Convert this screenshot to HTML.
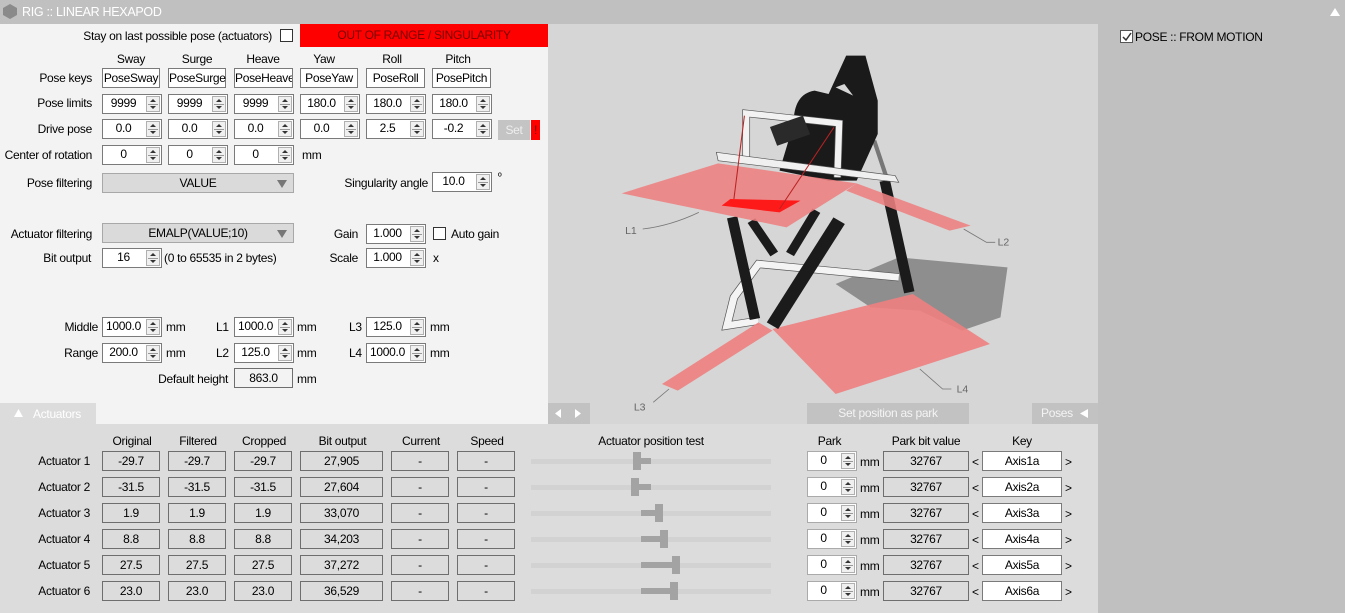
<!DOCTYPE html>
<html><head><meta charset="utf-8"><style>
*{box-sizing:border-box;margin:0;padding:0}
body{width:1345px;height:613px;overflow:hidden;background:#c0c0c0;font-family:"Liberation Sans",sans-serif;font-size:12px;color:#000;position:relative;letter-spacing:-0.3px}
.a{position:absolute;white-space:nowrap}
.r{text-align:right}
.c{text-align:center}
.tb{position:absolute;background:#fff;border:1px solid #7a7a7a;height:20px;line-height:18px;text-align:center}
.sp{position:absolute;background:#fff;border:1px solid #7a7a7a;height:20px;line-height:17px}
.sp span{position:absolute;left:0;right:17px;text-align:center}
.sp i{position:absolute;right:1px;top:1px;width:14px;height:16px;border:1px solid #b0b0b0;background:#f0f0f0}
.sp i:before{content:"";position:absolute;left:3px;top:2px;border:3px solid transparent;border-bottom:3px solid #333;border-top:0}
.sp i:after{content:"";position:absolute;left:3px;top:9px;border:3px solid transparent;border-top:3px solid #333;border-bottom:0}
.sp i b{position:absolute;left:1px;right:1px;top:7px;height:1px;background:#999}
.ro{position:absolute;background:#dcdcdc;border:1px solid #6e6e6e;height:20px;line-height:18px;text-align:center}
.cb{position:absolute;width:13px;height:13px;border:1px solid #333;background:#fff}
.combo{position:absolute;background:#dadada;border:1px solid #a8a8a8;height:20px;line-height:18px;text-align:center}
.combo:after{content:"";position:absolute;right:6px;top:6px;border:5px solid transparent;border-top:8px solid #777;border-bottom:0}
.trk{position:absolute;left:531px;width:240px;height:5px;background:#d2d2d2}
.th{position:absolute;width:8px;height:18px;background:#a3a3a3}
.fl{position:absolute;height:6px;background:#a3a3a3}
</style></head><body>
<div class="a" style="left:0;top:0;width:1345px;height:24px;background:#c0c0c0"></div>
<svg class="a" style="left:3px;top:4px" width="14" height="15"><polygon points="7,0 14,4 14,11 7,15 0,11 0,4" fill="#8a8a8a"/></svg>
<div class="a" style="left:22px;top:5px;color:#fff;font-size:12.5px">RIG :: LINEAR HEXAPOD</div>
<svg class="a" style="left:1330px;top:8px" width="10" height="8"><polygon points="5,0 10,8 0,8" fill="#fff"/></svg>

<div class="a" style="left:0;top:24px;width:548px;height:380px;background:#f3f3f3"></div>
<div class="a" style="left:0;top:403px;width:96px;height:21px;background:#dcdcdc"></div>
<svg class="a" style="left:14px;top:409px" width="9" height="8"><polygon points="4.5,0 9,8 0,8" fill="#fff"/></svg>
<div class="a" style="left:33px;top:407px;color:#fff">Actuators</div>
<div class="a" style="left:96px;top:403px;width:452px;height:21px;background:#f3f3f3"></div>

<div class="a r" style="left:0;width:272px;top:29px">Stay on last possible pose (actuators)</div>
<div class="cb" style="left:280px;top:29px"></div>
<div class="a c" style="left:300px;width:248px;top:24px;height:23px;line-height:23px;background:#ff0000;color:#700">OUT OF RANGE / SINGULARITY</div>

<div class="a c" style="left:102px;width:58px;top:52px">Sway</div>
<div class="a c" style="left:168px;width:58px;top:52px">Surge</div>
<div class="a c" style="left:234px;width:58px;top:52px">Heave</div>
<div class="a c" style="left:300px;width:48px;top:52px">Yaw</div>
<div class="a c" style="left:366px;width:52px;top:52px">Roll</div>
<div class="a c" style="left:432px;width:52px;top:52px">Pitch</div>

<div class="a r" style="left:0;width:92px;top:71px">Pose keys</div>
<div class="tb" style="left:102px;top:68px;width:58px">PoseSway</div>
<div class="tb" style="left:168px;top:68px;width:58px">PoseSurge</div>
<div class="tb" style="left:234px;top:68px;width:59px;overflow:hidden">PoseHeave</div>
<div class="tb" style="left:300px;top:68px;width:58px">PoseYaw</div>
<div class="tb" style="left:366px;top:68px;width:59px">PoseRoll</div>
<div class="tb" style="left:432px;top:68px;width:59px">PosePitch</div>

<div class="a r" style="left:0;width:92px;top:96px">Pose limits</div>
<div class="sp" style="left:102px;top:94px;width:60px"><span>9999</span><i><b></b></i></div>
<div class="sp" style="left:168px;top:94px;width:60px"><span>9999</span><i><b></b></i></div>
<div class="sp" style="left:234px;top:94px;width:60px"><span>9999</span><i><b></b></i></div>
<div class="sp" style="left:300px;top:94px;width:60px"><span>180.0</span><i><b></b></i></div>
<div class="sp" style="left:366px;top:94px;width:60px"><span>180.0</span><i><b></b></i></div>
<div class="sp" style="left:432px;top:94px;width:60px"><span>180.0</span><i><b></b></i></div>

<div class="a r" style="left:0;width:92px;top:122px">Drive pose</div>
<div class="sp" style="left:102px;top:119px;width:60px"><span>0.0</span><i><b></b></i></div>
<div class="sp" style="left:168px;top:119px;width:60px"><span>0.0</span><i><b></b></i></div>
<div class="sp" style="left:234px;top:119px;width:60px"><span>0.0</span><i><b></b></i></div>
<div class="sp" style="left:300px;top:119px;width:60px"><span>0.0</span><i><b></b></i></div>
<div class="sp" style="left:366px;top:119px;width:60px"><span>2.5</span><i><b></b></i></div>
<div class="sp" style="left:432px;top:119px;width:60px"><span>-0.2</span><i><b></b></i></div>
<div class="a c" style="left:498px;width:32px;top:120px;height:20px;line-height:20px;background:#c4c4c4;color:#eee">Set</div>
<div class="a c" style="left:531px;width:9px;top:120px;height:20px;line-height:20px;background:#f00;color:#700">!</div>

<div class="a r" style="left:0;width:92px;top:148px">Center of rotation</div>
<div class="sp" style="left:102px;top:145px;width:60px"><span>0</span><i><b></b></i></div>
<div class="sp" style="left:168px;top:145px;width:60px"><span>0</span><i><b></b></i></div>
<div class="sp" style="left:234px;top:145px;width:60px"><span>0</span><i><b></b></i></div>
<div class="a" style="left:302px;top:148px">mm</div>

<div class="a r" style="left:0;width:92px;top:176px">Pose filtering</div>
<div class="combo" style="left:102px;top:173px;width:192px">VALUE</div>
<div class="a r" style="left:320px;width:108px;top:176px">Singularity angle</div>
<div class="sp" style="left:432px;top:172px;width:60px"><span>10.0</span><i><b></b></i></div>
<div class="a" style="left:498px;top:172px;font-size:10px">º</div>

<div class="a r" style="left:0;width:92px;top:227px">Actuator filtering</div>
<div class="combo" style="left:102px;top:223px;width:192px">EMALP(VALUE;10)</div>
<div class="a r" style="left:310px;width:48px;top:227px">Gain</div>
<div class="sp" style="left:366px;top:224px;width:60px"><span>1.000</span><i><b></b></i></div>
<div class="cb" style="left:433px;top:227px"></div>
<div class="a" style="left:451px;top:227px">Auto gain</div>
<div class="a r" style="left:0;width:91px;top:251px">Bit output</div>
<div class="sp" style="left:102px;top:248px;width:60px"><span>16</span><i><b></b></i></div>
<div class="a" style="left:164px;top:251px">(0 to 65535 in 2 bytes)</div>
<div class="a r" style="left:310px;width:48px;top:251px">Scale</div>
<div class="sp" style="left:366px;top:248px;width:60px"><span>1.000</span><i><b></b></i></div>
<div class="a" style="left:433px;top:251px">x</div>

<div class="a r" style="left:0;width:98px;top:320px">Middle</div>
<div class="sp" style="left:102px;top:317px;width:60px"><span>1000.0</span><i><b></b></i></div>
<div class="a" style="left:166px;top:320px">mm</div>
<div class="a" style="left:216px;top:320px">L1</div>
<div class="sp" style="left:234px;top:317px;width:60px"><span>1000.0</span><i><b></b></i></div>
<div class="a" style="left:297px;top:320px">mm</div>
<div class="a" style="left:349px;top:320px">L3</div>
<div class="sp" style="left:366px;top:317px;width:60px"><span>125.0</span><i><b></b></i></div>
<div class="a" style="left:430px;top:320px">mm</div>
<div class="a r" style="left:0;width:98px;top:346px">Range</div>
<div class="sp" style="left:102px;top:343px;width:60px"><span>200.0</span><i><b></b></i></div>
<div class="a" style="left:166px;top:346px">mm</div>
<div class="a" style="left:216px;top:346px">L2</div>
<div class="sp" style="left:234px;top:343px;width:60px"><span>125.0</span><i><b></b></i></div>
<div class="a" style="left:297px;top:346px">mm</div>
<div class="a" style="left:349px;top:346px">L4</div>
<div class="sp" style="left:366px;top:343px;width:60px"><span>1000.0</span><i><b></b></i></div>
<div class="a" style="left:430px;top:346px">mm</div>
<div class="a r" style="left:100px;width:128px;top:372px">Default height</div>
<div class="ro" style="left:234px;top:368px;width:59px;background:#f3f3f3">863.0</div>
<div class="a" style="left:297px;top:372px">mm</div>

<div class="a" style="left:548px;top:24px;width:550px;height:400px;background:#d6d6d6"></div>
<svg class="a" style="left:548px;top:24px" width="550" height="400" viewBox="0 0 1568 1200" preserveAspectRatio="none">
<polygon points="1000,700 1310,730 1290,880 1180,920 1060,860 920,850 820,780" fill="#8e8e8e"/>
<polyline points="1000,760 600,720 530,820 510,905 600,890" fill="none" stroke="#555" stroke-width="24"/>
<polyline points="1000,760 600,720 530,820 510,905 600,890" fill="none" stroke="#f4f4f4" stroke-width="20"/>
<polygon points="640,915 1040,810 1260,960 820,1110" fill="#ee8080" opacity=".9"/>
<polygon points="325,1080 600,895 640,920 370,1100" fill="#ee8080" opacity=".9"/>
<g stroke="#1b1b1b" stroke-linecap="butt">
<line x1="525" y1="580" x2="590" y2="885" stroke-width="30"/>
<line x1="580" y1="590" x2="645" y2="690" stroke-width="26"/>
<line x1="690" y1="690" x2="765" y2="560" stroke-width="26"/>
<line x1="830" y1="590" x2="640" y2="905" stroke-width="38"/>
<line x1="960" y1="470" x2="1030" y2="805" stroke-width="30"/>
</g>
<line x1="930" y1="350" x2="965" y2="460" stroke="#777" stroke-width="12"/>
<path d="M850,95 L905,95 L940,230 L940,330 L880,470 L800,470 L660,440 L700,300 Q700,210 760,200 L800,210 Z" fill="#1a1a1a"/>
<polygon points="820,190 845,180 870,215" fill="#d6d6d6"/>
<g fill="none" stroke="#555" stroke-width="22"><polyline points="565,420 565,268 830,298 825,460"/></g>
<g fill="none" stroke="#f2f2f2" stroke-width="18"><polyline points="565,420 565,268 830,298 825,460"/></g>
<rect x="640" y="290" width="100" height="60" fill="#2a2a2a" transform="rotate(-20 690 320)"/>
<polygon points="480,385 990,455 1000,475 485,410" fill="#f0f0f0" stroke="#555" stroke-width="2"/>
<polygon points="210,508 485,418 880,478 680,610" fill="#ee8080" opacity=".88"/>
<polygon points="880,478 1205,605 1145,620 850,500" fill="#ee8080" opacity=".88"/>
<polygon points="520,525 720,530 660,565 495,545" fill="#ff1a1a"/>
<line x1="560" y1="275" x2="530" y2="525" stroke="#b22" stroke-width="3"/>
<line x1="815" y1="310" x2="660" y2="555" stroke="#b22" stroke-width="3"/>
<g font-family="Liberation Sans" font-size="30" fill="#666">
<text x="220" y="630">L1</text><text x="1282" y="665">L2</text><text x="245" y="1160">L3</text><text x="1165" y="1105">L4</text></g>
<g stroke="#777" fill="none" stroke-width="2.5">
<path d="M270,615 Q350,605 430,565"/><path d="M1275,655 L1250,655 L1185,615"/><path d="M300,1135 L345,1095"/><path d="M1150,1095 L1125,1095 L1060,1035"/></g>
</svg>
<div class="a" style="left:548px;top:403px;width:42px;height:21px;background:#c2c2c2"></div>
<svg class="a" style="left:555px;top:409px" width="30" height="9"><polygon points="0,4.5 6,0 6,9" fill="#fff"/><polygon points="26,4.5 20,0 20,9" fill="#fff"/></svg>
<div class="a c" style="left:807px;top:403px;width:162px;height:21px;line-height:21px;background:#c2c2c2;color:#f4f4f4">Set position as park</div>
<div class="a" style="left:1032px;top:403px;width:66px;height:21px;line-height:21px;background:#c2c2c2;color:#f4f4f4;padding-left:9px">Poses</div>
<svg class="a" style="left:1080px;top:409px" width="8" height="9"><polygon points="0,4.5 8,0 8,9" fill="#fff"/></svg>

<div class="cb" style="left:1120px;top:30px;border-color:#555"></div>
<svg class="a" style="left:1121px;top:31px" width="12" height="12"><path d="M2,6 L5,9 L10,2" stroke="#333" stroke-width="1.5" fill="none"/></svg>
<div class="a" style="left:1135px;top:30px">POSE :: FROM MOTION</div>

<div class="a" style="left:0;top:424px;width:1098px;height:189px;background:#dcdcdc"></div>
<div class="a c" style="left:102px;width:60px;top:434px">Original</div>
<div class="a c" style="left:168px;width:60px;top:434px">Filtered</div>
<div class="a c" style="left:234px;width:60px;top:434px">Cropped</div>
<div class="a c" style="left:300px;width:85px;top:434px">Bit output</div>
<div class="a c" style="left:391px;width:60px;top:434px">Current</div>
<div class="a c" style="left:457px;width:60px;top:434px">Speed</div>
<div class="a c" style="left:531px;width:240px;top:434px">Actuator position test</div>
<div class="a c" style="left:807px;width:45px;top:434px">Park</div>
<div class="a c" style="left:883px;width:86px;top:434px">Park bit value</div>
<div class="a c" style="left:982px;width:80px;top:434px">Key</div>

<div id="rows"></div>
<script>
var d=[["-29.7","27,905",637],["-31.5","27,604",635],["1.9","33,070",659],["8.8","34,203",664],["27.5","37,272",676],["23.0","36,529",674]];
var h="";
for(var i=0;i<6;i++){var y=451+i*26,v=d[i];
h+='<div class="a r" style="left:0;width:90px;top:'+(y+3)+'px">Actuator '+(i+1)+'</div>';
h+='<div class="ro" style="left:102px;top:'+y+'px;width:58px">'+v[0]+'</div>';
h+='<div class="ro" style="left:168px;top:'+y+'px;width:58px">'+v[0]+'</div>';
h+='<div class="ro" style="left:234px;top:'+y+'px;width:58px">'+v[0]+'</div>';
h+='<div class="ro" style="left:300px;top:'+y+'px;width:83px">'+v[1]+'</div>';
h+='<div class="ro" style="left:391px;top:'+y+'px;width:58px">-</div>';
h+='<div class="ro" style="left:457px;top:'+y+'px;width:58px">-</div>';
h+='<div class="trk" style="top:'+(y+8)+'px"></div>';
var c=651,t=v[2];
if(t<c)h+='<div class="fl" style="left:'+t+'px;width:'+(c-t)+'px;top:'+(y+7)+'px"></div>';
else h+='<div class="fl" style="left:'+(c-10)+'px;width:'+(t-c+10)+'px;top:'+(y+7)+'px"></div>';
h+='<div class="th" style="left:'+(t-4)+'px;top:'+(y+1)+'px"></div>';
h+='<div class="sp" style="left:807px;top:'+y+'px;width:50px;border-color:#aaa"><span>0</span><i><b></b></i></div>';
h+='<div class="a" style="left:860px;top:'+(y+4)+'px">mm</div>';
h+='<div class="ro" style="left:883px;top:'+y+'px;width:86px">32767</div>';
h+='<div class="a" style="left:972px;top:'+(y+4)+'px">&lt;</div>';
h+='<div class="tb" style="left:982px;top:'+y+'px;width:80px">Axis'+(i+1)+'a</div>';
h+='<div class="a" style="left:1065px;top:'+(y+4)+'px">&gt;</div>';}
document.getElementById("rows").innerHTML=h;
</script>
</body></html>
